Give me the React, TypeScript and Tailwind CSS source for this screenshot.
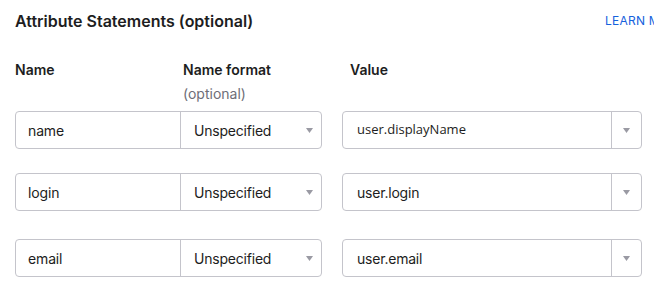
type Row = { name: string; format: string; value: string; mono?: boolean };

const ROWS: Row[] = [
  { name: 'name', format: 'Unspecified', value: 'user.displayName', mono: true },
  { name: 'login', format: 'Unspecified', value: 'user.login' },
  { name: 'email', format: 'Unspecified', value: 'user.email' },
];

function Caret() {
  return (
    <svg width="7" height="5" viewBox="0 0 7 5" className="text-[#9a9aa3]">
      <path d="M0 0h7L3.5 5z" fill="currentColor" />
    </svg>
  );
}

function AttributeRow({ row }: { row: Row }) {
  return (
    <div className="flex h-[38px] items-stretch">
      {/* Name + format */}
      <div className="flex w-[307px] rounded-[4px] border border-[#c4c4cb] bg-white">
        <div className="flex w-[165px] items-center border-r border-[#c4c4cb] pl-[12px] text-[14px] tracking-[-0.01em] text-[#1d1d21]">
          {row.name}
        </div>
        <div className="flex flex-1 items-center justify-between pl-[13px] pr-[8px] text-[14px] tracking-[-0.015em] text-[#1d1d21]">
          <span>{row.format}</span>
          <Caret />
        </div>
      </div>

      {/* Value */}
      <div className="ml-[20px] flex w-[300px] rounded-[4px] border border-[#c4c4cb] bg-white">
        <div
          className={`flex flex-1 items-center border-r border-[#c4c4cb] pl-[14px] text-[#1d1d21] ${
            row.mono ? "font-['Open_Sans'] text-[13px]" : 'text-[14px] tracking-[-0.015em]'
          }`}
        >
          {row.value}
        </div>
        <div className="flex w-[29px] items-center justify-center">
          <Caret />
        </div>
      </div>
    </div>
  );
}

export default function App() {
  return (
    <div className="h-[292px] w-[654px] overflow-hidden bg-white pl-[15px] font-['Inter',sans-serif] text-[#1d1d21]">
      {/* Header */}
      <div className="flex items-center pt-[11px]">
        <h2 className="w-[590px] shrink-0 text-[16px] font-semibold leading-[20px]">
          Attribute Statements (optional)
        </h2>
        <a className="whitespace-nowrap text-[12px] uppercase tracking-[0.02em] text-[#1662dd]">
          Learn more
        </a>
      </div>

      {/* Column labels */}
      <div className="mt-[29px] flex text-[14px] leading-[20px]">
        <div className="w-[168px] font-semibold">Name</div>
        <div className="w-[159px]">
          <div className="font-semibold">Name format</div>
          <div className="mt-[4px] text-[#6e6e78]">(optional)</div>
        </div>
        <div className="pl-[8px] font-semibold">Value</div>
      </div>

      {/* Rows */}
      <div className="mt-[7px]">
        <AttributeRow row={ROWS[0]} />
        <div className="mt-[24px]">
          <AttributeRow row={ROWS[1]} />
        </div>
        <div className="mt-[28px]">
          <AttributeRow row={ROWS[2]} />
        </div>
      </div>
    </div>
  );
}
